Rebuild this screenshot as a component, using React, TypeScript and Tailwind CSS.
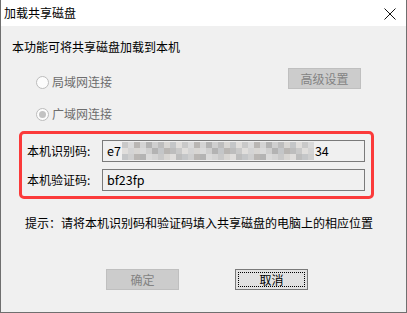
import React from 'react';

const shades = ['#c9c9c9', '#d4d4d4', '#bdbdbd', '#e0dedc', '#b9b6b3', '#cfcfcf', '#c4c6c8', '#dadada', '#b3b3b3', '#d8d6d3'];

function Mosaic() {
  const cells: string[] = [];
  for (let r = 0; r < 3; r++) {
    for (let c = 0; c < 32; c++) {
      cells.push(shades[(c * 7 + r * 3 + ((c * r) % 5)) % shades.length]);
    }
  }
  return (
    <div className="grid grid-cols-[repeat(32,6px)] grid-rows-[repeat(3,6px)] mx-[1px]">
      {cells.map((bg, i) => (
        <div key={i} style={{ backgroundColor: bg }} />
      ))}
    </div>
  );
}

function Radio({ checked, label }: { checked?: boolean; label: string }) {
  return (
    <div className="flex items-center h-4">
      <span className="w-[13px] h-[13px] rounded-full border border-[#bcbcbc] bg-[#fcfcfc] flex items-center justify-center">
        {checked && <span className="w-[7px] h-[7px] rounded-full bg-[#c2c2c2]" />}
      </span>
      <span className="ml-[3px] text-[#6d6d6d]">{label}</span>
    </div>
  );
}

export default function App() {
  return (
    <div className="w-[407px] h-[313px] flex flex-col text-[12px] leading-4 text-black font-['Microsoft_YaHei','Noto_Sans_CJK_SC',sans-serif] bg-[#f0f0f0] border-x border-b border-[#6f6f6f]">
      {/* Title bar */}
      <div className="h-[26px] bg-white flex items-center justify-between pl-[3px] pr-[10px]">
        <span className="text-[12px]">加载共享磁盘</span>
        <svg width="12" height="12" viewBox="0 0 12 12" className="mt-[1px]">
          <path d="M0.5 0.5 L11.5 11.5 M11.5 0.5 L0.5 11.5" stroke="#111" strokeWidth="1" />
        </svg>
      </div>

      {/* Body */}
      <div className="flex-1 flex flex-col">
        <p className="mt-[13px] ml-[11px]">本功能可将共享磁盘加载到本机</p>

        <div className="mt-[13px] flex justify-between pr-[45px]">
          <div className="flex flex-col gap-4 pt-[6px] pl-[35px]">
            <Radio label="局域网连接" />
            <Radio checked label="广域网连接" />
          </div>
          <button className="w-[73px] h-[21px] bg-[#cccccc] border border-[#bfbfbf] text-[#838383]">
            高级设置
          </button>
        </div>

        <div className="mt-[9px] ml-[18px] w-[355px] h-[68px] border-[3px] border-[#fb3a3a] rounded-[5px] flex flex-col gap-[7px] pt-[6px] pl-[5px]">
          <div className="flex items-center">
            <span className="w-[75px]">本机识别码:</span>
            <div className="w-[263px] h-[22px] border border-[#7a7a7a] flex items-center pl-[4px] text-[12.5px]">
              <span>e7</span>
              <Mosaic />
              <span>34</span>
            </div>
          </div>
          <div className="flex items-center">
            <span className="w-[75px]">本机验证码:</span>
            <div className="w-[263px] h-[22px] border border-[#7a7a7a] flex items-center pl-[4px] text-[12.5px]">
              bf23fp
            </div>
          </div>
        </div>

        <p className="mt-[16px] ml-[24px]">提示：请将本机识别码和验证码填入共享磁盘的电脑上的相应位置</p>

        <div className="mt-[38px] flex">
          <button className="ml-[105px] w-[73px] h-[21px] bg-[#cccccc] border border-[#bfbfbf] text-[#838383]">
            确定
          </button>
          <button className="ml-[56px] w-[73px] h-[21px] bg-[#e1e1e1] border border-[#7a7a7a] p-[2px]">
            <span className="w-full h-full border border-dotted border-black flex items-center justify-center">取消</span>
          </button>
        </div>
      </div>
    </div>
  );
}
